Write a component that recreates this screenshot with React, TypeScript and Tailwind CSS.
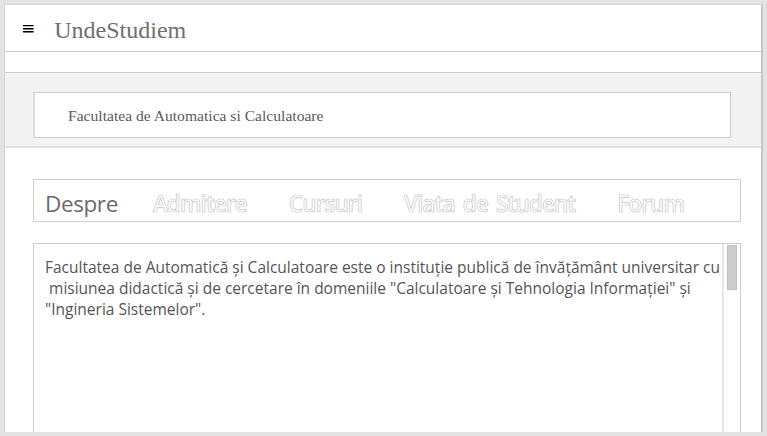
export default function App() {
  const tabs = ["Admitere", "Cursuri", "Viata de Student", "Forum"];

  return (
    <div className="w-[767px] h-[436px] bg-[#e3e3e3] pt-[4px] pl-[4px] pr-[4px] pb-[4px] overflow-hidden">
      <div className="h-full bg-white border-l border-t border-[#d6d6d6] border-r-2 border-r-[#c6c6c6] flex flex-col overflow-hidden">
        {/* Header */}
        <div className="h-[47px] shrink-0 flex items-center border-b border-[#c8c8c8]">
          <span className="ml-[16px] text-[17px] leading-none text-black font-['DejaVu_Sans',sans-serif]">≡</span>
          <span className="ml-[19px] mt-[3px] text-[24px] text-[#6f6f6f] font-['Liberation_Serif',serif] leading-none">
            UndeStudiem
          </span>
        </div>

        <div className="h-[21px] shrink-0 border-b border-[#cccccc]" />

        {/* Faculty bar */}
        <div className="shrink-0 bg-[#f3f3f3] pt-[19px] pb-[8px] pl-[28px] pr-[30px] border-b-2 border-[#e2e2e2]">
          <div className="h-[46px] bg-white border border-[#cdcdcd] border-l-2 border-l-[#dcdcdc] flex items-center pl-[33px]">
            <span className="mt-[2px] text-[15.6px] text-[#5a5a5a] font-['Liberation_Serif',serif]">
              Facultatea de Automatica si Calculatoare
            </span>
          </div>
        </div>

        {/* Tabs + content */}
        <div className="flex-1 pt-[31px] pl-[28px] pr-[20px] flex flex-col min-h-0">
          <div className="h-[43px] shrink-0 border border-[#cfcfcf] flex items-center pl-[11px] pt-[7px] font-['Open_Sans',sans-serif] text-[22.5px]">
            <span className="text-[#6a6a6a] mr-[35px] tracking-[-0.4px]">Despre</span>
            <span className="text-transparent [-webkit-text-stroke:0.7px_#c6c6c6] font-semibold tracking-[-0.9px] [word-spacing:3px] flex">
              {tabs.map((t, i) => (
                <span key={t} className={i < tabs.length - 1 ? "mr-[42px]" : ""}>
                  {t}
                </span>
              ))}
            </span>
          </div>

          <div className="mt-[21px] flex-1 border-l border-t border-r border-[#cdcdcd] flex min-h-0">
            <div className="flex-1 pl-[11px] pt-[13px] text-[15.5px] leading-[21px] text-[#555555] font-['Open_Sans',sans-serif]">
              <p className="whitespace-nowrap">
                Facultatea de Automatică și Calculatoare este o instituție publică de învățământ universitar cu
              </p>
              <p className="whitespace-pre">
                {" misiunea didactică și de cercetare în domeniile \"Calculatoare și Tehnologia Informației\" și"}
              </p>
              <p className="whitespace-nowrap">"Ingineria Sistemelor".</p>
            </div>
            <div className="w-[18px] shrink-0 border-l-2 border-[#e6e6e6] pt-[1px] px-[3px]">
              <div className="h-[45px] bg-[#cdcdcd] border border-[#c0c0c0]" />
            </div>
          </div>
        </div>
      </div>
    </div>
  );
}
